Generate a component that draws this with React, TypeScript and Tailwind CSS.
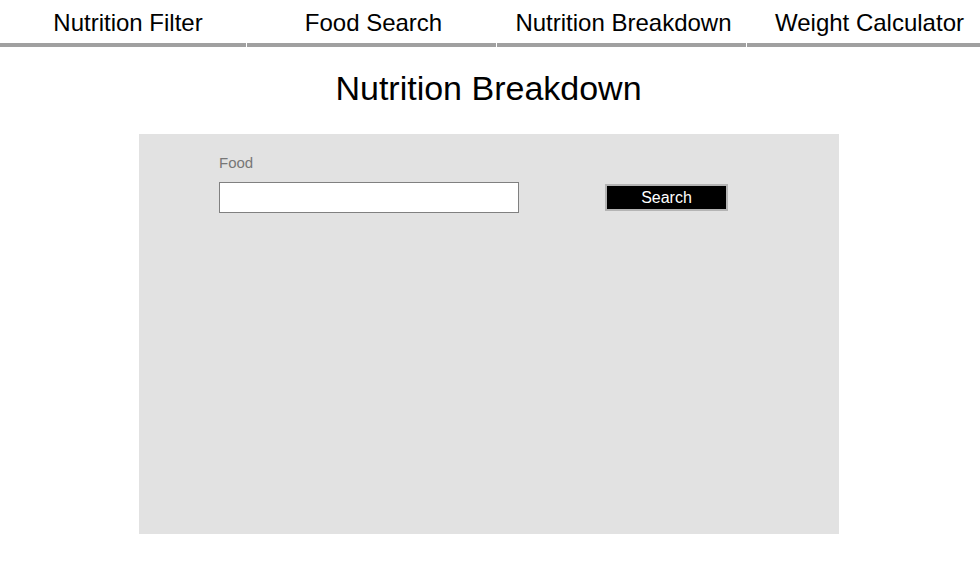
import React from 'react';

const tabs = [
  { label: 'Nutrition Filter', cls: 'w-[246px] pl-[10px]' },
  { label: 'Food Search', cls: 'w-[249px] pl-[4px]' },
  { label: 'Nutrition Breakdown', cls: 'w-[249px] pl-[4px]' },
  { label: 'Weight Calculator', cls: 'flex-1 pl-[12px]' },
];

export default function App() {
  return (
    <div className="min-h-[566px] bg-white font-['Liberation_Sans',Arial,sans-serif] text-black">
      <nav className="flex gap-px">
        {tabs.map((tab) => (
          <div
            key={tab.label}
            className={`${tab.cls} shrink-0 border-b-4 border-[#a0a0a0] pt-[9px] pb-[7px] text-center text-[24px] leading-[27px]`}
          >
            {tab.label}
          </div>
        ))}
      </nav>

      <h1 className="mt-[22px] pr-[3px] text-center text-[34px] leading-[39px]">Nutrition Breakdown</h1>

      <section className="ml-[139px] mt-[26px] h-[400px] w-[700px] bg-[#e2e2e2] pl-[80px] pt-[21px]">
        <label className="block text-[15px] leading-[16px] text-[#777]">Food</label>
        <div className="mt-[11px] flex items-center">
          <input
            type="text"
            className="h-[31px] w-[300px] border border-[#808080] bg-white px-1 text-[14px] outline-none"
          />
          <button className="ml-[86px] h-[27px] w-[123px] border-2 border-[#b4b4b4] bg-black text-[16px] text-white">
            Search
          </button>
        </div>
      </section>
    </div>
  );
}
